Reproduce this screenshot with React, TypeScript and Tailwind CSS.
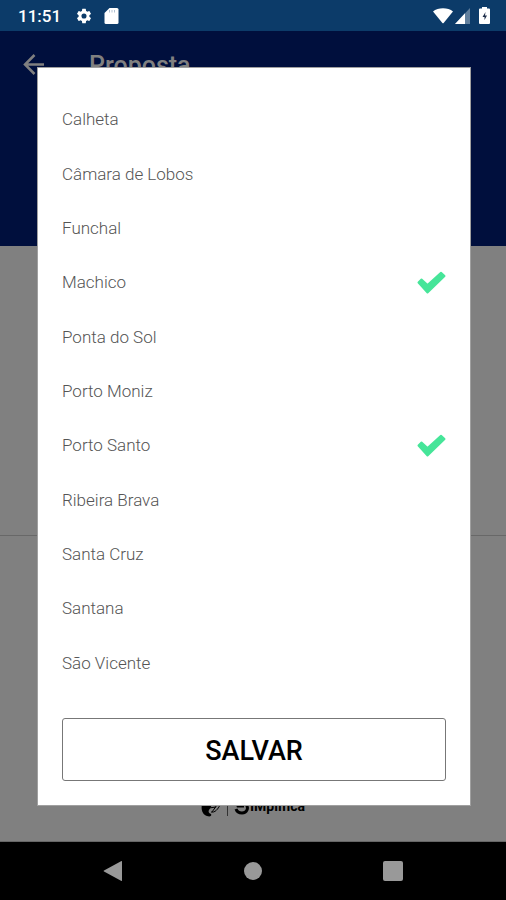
import { useState } from 'react';

const places = [
  'Calheta',
  'Câmara de Lobos',
  'Funchal',
  'Machico',
  'Ponta do Sol',
  'Porto Moniz',
  'Porto Santo',
  'Ribeira Brava',
  'Santa Cruz',
  'Santana',
  'São Vicente',
];

function StatusBar() {
  return (
    <div className="flex h-[31px] shrink-0 items-center bg-[#0c3b69] pl-[18px] pr-4 text-white">
      <span className="text-[17px] leading-5 font-medium">11:51</span>
      <svg className="ml-3.5 size-[18px]" viewBox="0 0 24 24" fill="currentColor" aria-hidden="true">
        <path d="M19.14 12.94c.04-.3.06-.61.06-.94s-.02-.64-.07-.94l2.03-1.58a.49.49 0 0 0 .12-.61l-1.92-3.32a.49.49 0 0 0-.59-.22l-2.39.96a7 7 0 0 0-1.62-.94l-.36-2.54A.48.48 0 0 0 13.920 2.400h-3.840a.47.47 0 0 0-.47.41l-.36 2.54c-.59.24-1.13.57-1.620.94l-2.390-.96a.47.47 0 0 0-.59.22L2.740 8.870a.48.48 0 0 0 .12.61l2.030 1.580c-.05.3-.09.63-.09.94s.02.64.07.94l-2.030 1.580a.49.49 0 0 0-.12.61l1.920 3.320c.12.22.37.29.59.22l2.390-.96c.5.38 1.030.7 1.620.94l.36 2.540c.05.24.24.41.48.41h3.840c.24 0 .44-.17.47-.41l.36-2.540c.59-.24 1.130-.56 1.620-.94l2.390.96c.22.08.47 0 .59-.22l1.920-3.320a.47.47 0 0 0-.12-.61zM12 15.400a3.400 3.400 0 1 1 0-6.800 3.400 3.400 0 0 1 0 6.800z" />
      </svg>
      <svg className="ml-[11px] h-4 w-[15px]" viewBox="0 0 15 16" aria-hidden="true">
        <path d="M5.500 0H13a1.500 1.500 0 0 1 1.500 1.500v13A1.500 1.500 0 0 1 13 16H2a1.500 1.500 0 0 1-1.500-1.500V5z" fill="currentColor" />
        <path d="M5.500 2v2.500M8 2v2.500M10.500 2v2.500" stroke="#b4c3d3" strokeWidth="1" />
      </svg>
      <svg className="ml-auto h-4 w-5" viewBox="0 0 20 16" fill="currentColor" aria-hidden="true">
        <path d="M0 3.500C5-.9 15-.9 20 3.500L10.600 15a.8.8 0 0 1-1.200 0z" />
      </svg>
      <svg className="ml-0.5 h-4 w-[15px]" viewBox="0 0 15 16" fill="currentColor" aria-hidden="true">
        <path d="M15 0v16H0z" fillOpacity="0.350" />
        <path d="M10 5.300V16H0z" />
      </svg>
      <svg className="ml-[9px] h-[17px] w-[11px]" viewBox="0 0 11 17" aria-hidden="true">
        <path d="M3 0h5v1.500h2a1 1 0 0 1 1 1V16a1 1 0 0 1-1 1H1a1 1 0 0 1-1-1V2.500a1 1 0 0 1 1-1h2z" fill="currentColor" />
        <path d="M6.500 5L3.500 10h2v3L8 8.500H6z" fill="#1f2f4a" />
      </svg>
    </div>
  );
}

function Background() {
  return (
    <div className="flex flex-1 flex-col">
      <header className="flex h-[215px] shrink-0 items-start bg-[#000f3d] pt-[19px] pl-[22px] text-[#808080]">
        <button type="button" aria-label="Voltar" className="flex">
          <svg className="h-7 w-6" viewBox="0 0 24 28" fill="none" stroke="currentColor" strokeWidth="2.500" aria-hidden="true">
            <path d="M22 14.500H3.500M12.500 5L3 14.500l9.500 9.500" />
          </svg>
        </button>
        <h1 className="ml-[43px] text-[25px] leading-8 font-medium">Proposta</h1>
      </header>
      <div className="h-[290px] shrink-0 border-b border-[#686868]" />
      <div className="flex flex-1 items-end justify-center border-b border-[#666666] pb-[23px]">
        <div className="flex h-6 items-center gap-1.5 text-black">
          <svg className="h-6 w-5" viewBox="0 0 20 24" aria-hidden="true">
            <path d="M3 5C-1 12 0 20 6 22c3 1 5 0 4-2-2-1-3-2-2-4l3-5z" fill="currentColor" />
            <path d="M10 18c4 1 7-3 9-7M8 14l7-1M11 18l5-7" fill="none" stroke="currentColor" strokeWidth="1" />
          </svg>
          <span className="h-5 w-px bg-[#333333]" />
          <span className="flex items-center">
            <svg className="h-6 w-4" viewBox="0 0 16 24" fill="none" stroke="currentColor" strokeWidth="3" aria-hidden="true">
              <path d="M12 2C5 1 2 7 4 12h6M12 10c3 4 1 9-4 9-3 0-5-1-6-4" />
            </svg>
            <span className="text-[14px] leading-6 font-bold">IMplifica</span>
          </span>
        </div>
      </div>
    </div>
  );
}

function PlaceRow({ name, checked, onToggle }: { name: string; checked: boolean; onToggle: () => void }) {
  return (
    <li className="flex flex-1">
      <label className="flex flex-1 cursor-pointer items-center justify-between text-[17px] leading-6 font-light text-[#555555]">
        {name}
        <input type="checkbox" checked={checked} onChange={onToggle} className="peer sr-only" />
        <svg className="hidden h-[23px] w-[29px] text-[#46e599] peer-checked:block" viewBox="0 0 29 23" fill="currentColor" stroke="currentColor" strokeWidth="2" strokeLinejoin="round" aria-hidden="true">
          <path d="M1.500 11.500L4.500 8.500 10.500 14 24 1.800 27.500 5 10.500 21.500z" />
        </svg>
      </label>
    </li>
  );
}

function NavigationBar() {
  return (
    <nav className="flex h-[58px] shrink-0 items-center justify-center gap-[121px] bg-black text-[#999999]">
      <button type="button" aria-label="Voltar">
        <svg className="size-5" viewBox="0 0 20 20" fill="currentColor" aria-hidden="true">
          <path d="M19 0.500v19a.6.6 0 0 1-1 .3L1 10.500a.6.6 0 0 1 0-1L18 .2a.6.6 0 0 1 1 .3z" />
        </svg>
      </button>
      <button type="button" aria-label="Início" className="size-[18px] rounded-full bg-[#999999]" />
      <button type="button" aria-label="Aplicações recentes" className="size-5 rounded-xs bg-[#999999]" />
    </nav>
  );
}

export default function App() {
  const [selected, setSelected] = useState(['Machico', 'Porto Santo']);

  const toggle = (name: string) =>
    setSelected((current) =>
      current.includes(name) ? current.filter((item) => item !== name) : [...current, name],
    );

  return (
    <div className="flex min-h-screen flex-col bg-[#808080] font-['Roboto',sans-serif]">
      <StatusBar />
      <div className="relative flex flex-1 flex-col">
        <Background />
        <div className="absolute inset-0 flex py-9 pr-[35px] pl-[37px]">
          <form
            role="dialog"
            aria-label="Concelhos"
            onSubmit={(event) => event.preventDefault()}
            className="flex flex-1 flex-col border border-[#a0a0a0] bg-white p-6"
          >
            <ul className="flex flex-1 flex-col">
              {places.map((name) => (
                <PlaceRow key={name} name={name} checked={selected.includes(name)} onToggle={() => toggle(name)} />
              ))}
            </ul>
            <button
              type="submit"
              className="mt-7 h-[63px] shrink-0 rounded-[3px] border border-[#777777] bg-white pt-0.5 text-[27px] leading-8 font-medium text-black"
            >
              SALVAR
            </button>
          </form>
        </div>
      </div>
      <NavigationBar />
    </div>
  );
}
